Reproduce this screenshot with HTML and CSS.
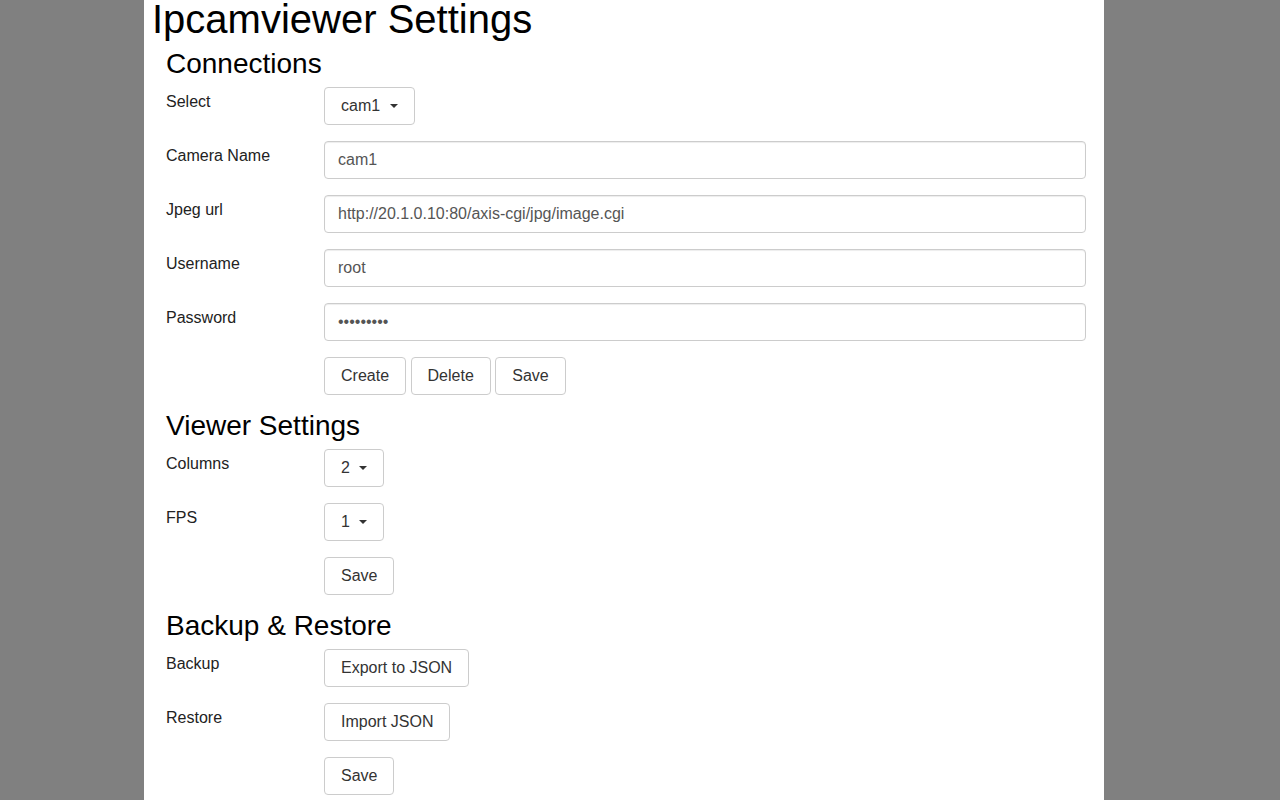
FILE: index.html
```html
<!DOCTYPE html>
<html lang="en">
<head>
<meta charset="utf-8">
<title>Ipcamviewer Settings</title>
<link rel="stylesheet" href="styles.css">
</head>
<body>
<div class="page">
  <h1 class="title">Ipcamviewer Settings</h1>

  <section class="section">
    <h2 class="section-title">Connections</h2>
    <div class="rows">
      <div class="row">
        <label class="row-label">Select</label>
        <div class="row-control">
          <button class="btn" type="button">cam1<span class="caret"></span></button>
        </div>
      </div>
      <div class="row">
        <label class="row-label">Camera Name</label>
        <div class="row-control"><input class="field" type="text" value="cam1"></div>
      </div>
      <div class="row">
        <label class="row-label">Jpeg url</label>
        <div class="row-control"><input class="field" type="text" value="http://20.1.0.10:80/axis-cgi/jpg/image.cgi"></div>
      </div>
      <div class="row">
        <label class="row-label">Username</label>
        <div class="row-control"><input class="field" type="text" value="root"></div>
      </div>
      <div class="row">
        <label class="row-label">Password</label>
        <div class="row-control"><input class="field" type="password" value="123456789"></div>
      </div>
      <div class="row">
        <span class="row-label"></span>
        <div class="row-control btn-line">
          <button class="btn" type="button">Create</button>
          <button class="btn" type="button">Delete</button>
          <button class="btn" type="button">Save</button>
        </div>
      </div>
    </div>
  </section>

  <section class="section">
    <h2 class="section-title">Viewer Settings</h2>
    <div class="rows">
      <div class="row">
        <label class="row-label">Columns</label>
        <div class="row-control"><button class="btn" type="button">2<span class="caret"></span></button></div>
      </div>
      <div class="row">
        <label class="row-label">FPS</label>
        <div class="row-control"><button class="btn" type="button">1<span class="caret"></span></button></div>
      </div>
      <div class="row">
        <span class="row-label"></span>
        <div class="row-control"><button class="btn" type="button">Save</button></div>
      </div>
    </div>
  </section>

  <section class="section">
    <h2 class="section-title">Backup &amp; Restore</h2>
    <div class="rows">
      <div class="row">
        <label class="row-label">Backup</label>
        <div class="row-control"><button class="btn" type="button">Export to JSON</button></div>
      </div>
      <div class="row">
        <label class="row-label">Restore</label>
        <div class="row-control"><button class="btn" type="button">Import JSON</button></div>
      </div>
      <div class="row">
        <span class="row-label"></span>
        <div class="row-control"><button class="btn" type="button">Save</button></div>
      </div>
    </div>
  </section>
</div>
</body>
</html>
```

FILE: styles.css
```css
html, body {
  margin: 0;
  padding: 0;
}
body {
  background: #808080;
  font-family: "Liberation Sans", Arial, sans-serif;
  font-size: 16px;
  color: #222;
  padding-right: 32px;
}
.page {
  width: 960px;
  margin: 0 auto;
  min-height: 100vh;
  background: #fff;
  padding-bottom: 20px;
  box-sizing: border-box;
}
.title {
  margin: 0;
  padding: 0 8px;
  font-size: 40px;
  font-weight: normal;
  line-height: 38px;
  color: #000;
}
.section {
  padding: 0 18px 0 22px;
  margin-top: 9.5px;
}
.section + .section {
  margin-top: 14.5px;
}
.section-title {
  margin: 0 0 8.5px 0;
  font-size: 28px;
  font-weight: normal;
  line-height: 31px;
  color: #000;
}
.rows {
  display: flex;
  flex-direction: column;
  gap: 16px;
}
.row {
  display: flex;
  align-items: flex-start;
}
.row-label {
  width: 158px;
  flex: none;
  padding-top: 3px;
  line-height: 24px;
  color: #222;
}
.row-control {
  flex: 1;
  min-width: 0;
}
.btn-line {
  display: flex;
  gap: 4.5px;
}
.btn {
  display: inline-flex;
  align-items: center;
  height: 38px;
  box-sizing: border-box;
  padding: 6px 16px;
  margin: 0;
  font-family: inherit;
  font-size: 16px;
  line-height: 24px;
  color: #333;
  background: #fff;
  border: 1px solid #ccc;
  border-radius: 4px;
}
.caret {
  display: inline-block;
  width: 0;
  height: 0;
  margin-left: 9.5px;
  border-top: 4px solid #333;
  border-left: 4px solid transparent;
  border-right: 4px solid transparent;
}
.field {
  display: block;
  width: 100%;
  height: 38px;
  box-sizing: border-box;
  padding: 6px 13px;
  margin: 0;
  font-family: inherit;
  font-size: 16px;
  line-height: 24px;
  color: #555;
  background: #fff;
  border: 1px solid #ccc;
  border-radius: 4px;
  box-shadow: inset 0 1px 1px rgba(0, 0, 0, 0.075);
}
```
